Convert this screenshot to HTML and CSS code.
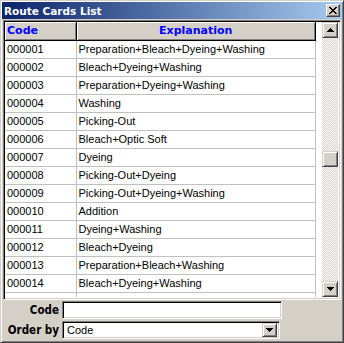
FILE: index.html
```html
<!DOCTYPE html>
<html lang="en">
<head>
  <meta charset="UTF-8" />
  <title>Route Cards List</title>
  <link rel="stylesheet" href="styles.css">
</head>
<body>
  <div class="window">
    <div class="titlebar">
      <span class="title">Route Cards List</span>
      <span class="close-btn">
        <svg width="8" height="7" viewBox="0 0 8 7"><path d="M0 0h2v1h1v1h2v-1h1v-1h2v1h-1v1h-1v1h-1v1h1v1h1v1h1v1h-2v-1h-1v-1h-2v1h-1v1h-2v-1h1v-1h1v-1h1v-1h-1v-1h-1v-1h-1z" fill="#000"/></svg>
      </span>
    </div>

    <div class="grid">
      <div class="grid-body">
        <table class="cards">
          <thead>
            <tr>
              <th class="col-code">Code</th>
              <th class="col-expl">Explanation</th>
            </tr>
          </thead>
          <tbody>
            <tr><td>000001</td><td>Preparation+Bleach+Dyeing+Washing</td></tr>
            <tr><td>000002</td><td>Bleach+Dyeing+Washing</td></tr>
            <tr><td>000003</td><td>Preparation+Dyeing+Washing</td></tr>
            <tr><td>000004</td><td>Washing</td></tr>
            <tr><td>000005</td><td>Picking-Out</td></tr>
            <tr><td>000006</td><td>Bleach+Optic Soft</td></tr>
            <tr><td>000007</td><td>Dyeing</td></tr>
            <tr><td>000008</td><td>Picking-Out+Dyeing</td></tr>
            <tr><td>000009</td><td>Picking-Out+Dyeing+Washing</td></tr>
            <tr><td>000010</td><td>Addition</td></tr>
            <tr><td>000011</td><td>Dyeing+Washing</td></tr>
            <tr><td>000012</td><td>Bleach+Dyeing</td></tr>
            <tr><td>000013</td><td>Preparation+Bleach+Washing</td></tr>
            <tr><td>000014</td><td>Bleach+Dyeing+Washing</td></tr>
            <tr><td>&nbsp;</td><td>&nbsp;</td></tr>
          </tbody>
        </table>
      </div>
      <div class="vscroll">
        <span class="sb-btn"><svg width="7" height="4" viewBox="0 0 7 4"><path d="M3 0h1v1h1v1h1v1h1v1h-7v-1h1v-1h1v-1h1z" fill="#000"/></svg></span>
        <div class="sb-track">
          <span class="sb-thumb"></span>
        </div>
        <span class="sb-btn"><svg width="7" height="4" viewBox="0 0 7 4"><path d="M0 0h7v1h-1v1h-1v1h-1v1h-1v-1h-1v-1h-1v-1h-1z" fill="#000"/></svg></span>
      </div>
    </div>

    <div class="filters">
      <div class="field">
        <label for="code">Code</label>
        <input id="code" class="text-box" />
      </div>
      <div class="field">
        <label>Order by</label>
        <div class="combo">
          <span class="combo-value">Code</span>
          <span class="sb-btn combo-btn"><svg width="7" height="4" viewBox="0 0 7 4"><path d="M0 0h7v1h-1v1h-1v1h-1v1h-1v-1h-1v-1h-1v-1h-1z" fill="#000"/></svg></span>
        </div>
      </div>
    </div>
  </div>
</body>
</html>
```

FILE: styles.css
```css
* {
  box-sizing: border-box; margin: 0; padding: 0;
}
body {
  width: 344px;
  height: 343px;
  overflow: hidden;
  font-family: 'Liberation Sans', Arial, sans-serif;
  font-size: 11px;
  color: #000;
}
.window {
  width: 344px;
  height: 343px;
  background: #d4d0c8;
  border: 1px solid;
  border-color: #d4d0c8 #404040 #404040 #d4d0c8;
  box-shadow: inset 1px 1px 0 #fff, inset -1px -1px 0 #808080;
  padding: 1px 2px 2px 2px;
  display: flex;
  flex-direction: column;
}
.titlebar {
  height: 17px;
  flex: none;
  margin: 0 -1px 0 -1px;
  background: linear-gradient(to right, #0a246a, #a6caf0);
  display: flex;
  align-items: center;
  justify-content: space-between;
  padding: 0 2px 0 2px;
}
.title {
  color: #fff;
  font-family: 'DejaVu Sans', sans-serif;
  font-weight: 700;
  font-size: 10.5px;
}
.close-btn {
  width: 14px;
  height: 13px;
  background: #d4d0c8;
  border: 1px solid;
  border-color: #fff #404040 #404040 #fff;
  box-shadow: inset -1px -1px 0 #808080;
  display: flex;
  align-items: center;
  justify-content: center;
}

/* grid */
.grid {
  height: 280px;
  flex: none;
  margin-top: 1px;
  background: #fff;
  border: 1px solid;
  border-color: #808080 #fff #fff #808080;
  box-shadow: inset 1px 1px 0 #000, inset -1px -1px 0 #d4d0c8;
  padding: 1px 2px 2px 1px;
  display: flex;
  overflow: hidden;
}
.grid-body {
  flex: 1;
  overflow: hidden;
}
.cards {
  border-collapse: collapse;
  table-layout: fixed;
  width: 311px;
}
.cards th {
  height: 18px;
  background: #d4d0c8;
  color: #0000ff;
  font-family: 'DejaVu Sans', sans-serif;
  font-weight: 700;
  font-size: 11px;
  border-right: 1px solid #000;
  border-bottom: 1px solid #000;
  box-shadow: inset 1px 1px 0 #fff, inset -1px -1px 0 #808080;
  padding: 0 2px;
}
.cards .col-code {
  width: 71px;
  text-align: left;
}
.cards .col-expl {
  text-align: center;
}
.cards td {
  height: 18px;
  border-right: 1px solid #c0c0c0;
  border-bottom: 1px solid #c0c0c0;
  padding: 0 2px;
  white-space: nowrap;
  overflow: hidden;
}

/* scrollbar */
.vscroll {
  width: 16px;
  display: flex;
  flex-direction: column;
}
.sb-btn {
  width: 16px;
  height: 16px;
  flex: none;
  background: #d4d0c8;
  border: 1px solid;
  border-color: #d4d0c8 #404040 #404040 #d4d0c8;
  box-shadow: inset 1px 1px 0 #fff, inset -1px -1px 0 #808080;
  display: flex;
  align-items: center;
  justify-content: center;
}
.sb-track {
  flex: 1;
  background: repeating-conic-gradient(#d4d0c8 0 25%, #fff 0 50%) 0 0 / 2px 2px;
  padding-top: 113px;
}
.sb-thumb {
  display: block;
  width: 16px;
  height: 16px;
  background: #d4d0c8;
  border: 1px solid;
  border-color: #d4d0c8 #404040 #404040 #d4d0c8;
  box-shadow: inset 1px 1px 0 #fff, inset -1px -1px 0 #808080;
}

/* filters */
.filters {
  display: flex;
  flex-direction: column;
  gap: 2px;
  padding-top: 1px;
}
.field {
  display: flex;
  align-items: center;
}
.field label {
  width: 59px;
  padding-right: 3px;
  text-align: right;
  white-space: nowrap;
  font-family: 'DejaVu Sans', sans-serif;
  font-stretch: condensed;
  font-weight: 700;
  font-size: 11.5px;
}
.text-box, .combo {
  height: 18px;
  background: #fff;
  border: 1px solid;
  border-color: #808080 #fff #fff #808080;
  box-shadow: inset 1px 1px 0 #000, inset -1px -1px 0 #d4d0c8;
  font-family: 'Liberation Sans', Arial, sans-serif;
  font-size: 11px;
  outline: none;
}
.text-box {
  width: 220px;
}
.combo {
  width: 218px;
  display: flex;
  align-items: center;
  justify-content: space-between;
  padding: 2px 2px 2px 4px;
}
.combo-btn {
  width: 15px;
  height: 14px;
}
```
